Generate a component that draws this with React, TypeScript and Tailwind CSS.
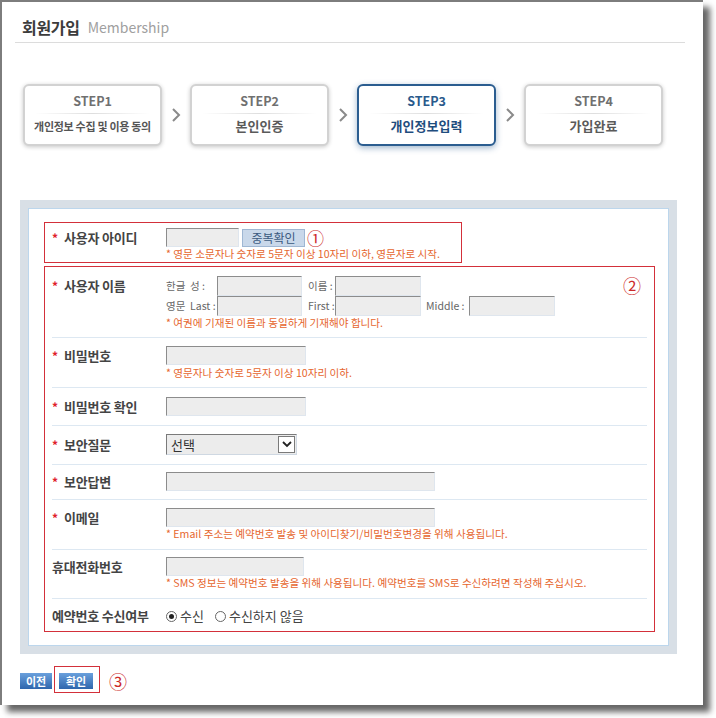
import type { ReactNode } from "react";

const FONT = "font-['Noto_Sans_CJK_KR','Noto_Sans',sans-serif]";

const steps = [
  { no: "STEP1", title: "개인정보 수집 및 이용 동의", small: true, active: false },
  { no: "STEP2", title: "본인인증", small: false, active: false },
  { no: "STEP3", title: "개인정보입력", small: false, active: true },
  { no: "STEP4", title: "가입완료", small: false, active: false },
];

function Chevron() {
  return (
    <div className="flex w-[28px] items-center justify-center">
      <svg width="10" height="16" viewBox="0 0 10 16">
        <polyline points="2,2 8,8 2,14" fill="none" stroke="#8a8a8a" strokeWidth="2" />
      </svg>
    </div>
  );
}

function StepBox({ no, title, small, active }: (typeof steps)[number]) {
  return (
    <div
      className={
        active
          ? "h-[62px] w-[139px] rounded-[6px] border-2 border-[#2b5d90] bg-white shadow-[0_2px_6px_rgba(43,93,144,0.45)]"
          : "h-[62px] w-[139px] rounded-[6px] border-2 border-[#d2d2d2] bg-white shadow-[0_1px_4px_rgba(0,0,0,0.22)]"
      }
    >
      <p
        className={`mt-[8px] text-center text-[12.5px] font-bold leading-[14px] ${
          active ? "text-[#2a5a8c]" : "text-[#707070]"
        }`}
      >
        {no}
      </p>
      <div className="mx-[10px] mt-[5px] h-px bg-gradient-to-r from-transparent via-[#dedede] to-transparent" />
      <p
        className={`mt-[4px] whitespace-nowrap text-center leading-[16px] ${
          small
            ? "text-[11px] font-bold tracking-[-0.3px] text-[#555]"
            : active
              ? "text-[13px] font-bold text-[#1f4d7e]"
              : "text-[13px] font-bold text-[#5a5a5a]"
        }`}
      >
        {title}
      </p>
    </div>
  );
}

function Input({ className }: { className: string }) {
  return (
    <div
      className={`border-b border-l border-r border-t border-b-[#dfe6ee] border-l-[#8c8c8c] border-r-[#dfe6ee] border-t-[#8c8c8c] bg-[#ededed] ${className}`}
    />
  );
}

function Note({ children }: { children: ReactNode }) {
  return <p className="text-[10.6px] leading-[12px] text-[#e6662e]">* {children}</p>;
}

type RowProps = {
  label: string;
  required?: boolean;
  className: string;
  labelH?: string;
  children: ReactNode;
};

function Row({ label, required, className, labelH = "h-[19px]", children }: RowProps) {
  return (
    <div className={`mx-[7px] flex items-start ${className}`}>
      <div className={`flex w-[114px] shrink-0 items-center ${labelH}`}>
        {required && (
          <span className="w-[12px] text-[12px] font-bold leading-none text-[#e0202a]">*</span>
        )}
        <span className="whitespace-nowrap text-[13px] font-bold tracking-[-0.2px] text-[#444]">
          {label}
        </span>
      </div>
      <div className="flex flex-col">{children}</div>
    </div>
  );
}

function Radio({ checked }: { checked?: boolean }) {
  return (
    <span className="flex h-[11px] w-[11px] items-center justify-center rounded-full border border-[#666] bg-white">
      {checked && <span className="h-[5px] w-[5px] rounded-full bg-[#222]" />}
    </span>
  );
}

export default function App() {
  return (
    <div className={`h-[718px] w-[716px] overflow-hidden bg-white ${FONT}`}>
      <div className="h-[705px] w-[703px] border-l-2 border-t-2 border-[#7d7d7d] bg-white shadow-[7px_7px_6px_rgba(0,0,0,0.6)]">
        <header className="ml-[13px] flex h-[41px] w-[670px] items-end border-b border-[#dcdcdc] pb-[5px] pl-[7px]">
          <h1 className="text-[16px] font-bold leading-[20px] tracking-[-0.3px] text-[#3c3c3c]">회원가입</h1>
          <span className="ml-[8px] text-[14px] leading-[20px] text-[#a0a0a0]">Membership</span>
        </header>

        <div className="ml-[21px] mt-[41px] flex">
          <StepBox {...steps[0]} />
          <Chevron />
          <StepBox {...steps[1]} />
          <Chevron />
          <StepBox {...steps[2]} />
          <Chevron />
          <StepBox {...steps[3]} />
        </div>

        <section className="ml-[18px] mt-[54px] w-[657px] bg-[#d8dfe6] p-[8px]">
          <div className="border border-[#bcd6ec] bg-white pb-[13px] pl-[15px] pt-[13px]">
            <div className="w-[418px] border border-[#d3303a] pb-[2px] pt-[5px]">
              <Row label="사용자 아이디" required className="">
                <div className="flex h-[19px] items-center">
                  <Input className="h-[19px] w-[73px]" />
                  <button className="ml-[3px] block h-[18px] w-[63px] border border-[#9fb7d3] bg-[#c9d8ea] text-[12px] leading-none text-[#3b5a80]">
                    중복확인
                  </button>
                  <span className="ml-[2px] text-[17px] leading-[17px] text-[#cc2a2a]">①</span>
                </div>
                <div className="mt-[1px]">
                  <Note>영문 소문자나 숫자로 5문자 이상 10자리 이하, 영문자로 시작.</Note>
                </div>
              </Row>
            </div>

            <div className="relative mt-[3px] w-[611px] border border-[#d3303a]">
              <span className="absolute right-[13px] top-[9px] text-[18px] leading-none text-[#cc2a2a]">②</span>

              <Row
                label="사용자 이름"
                required
                labelH="h-[20px]"
                className="h-[71px] border-b border-[#dde8f2] pt-[9px]"
              >
                <div className="flex items-center text-[10.5px] text-[#666]">
                  <span className="w-[51px]">한글&nbsp;&nbsp;성 :</span>
                  <Input className="h-[20px] w-[85px]" />
                  <span className="ml-[6px] w-[27px]">이름 :</span>
                  <Input className="h-[20px] w-[86px]" />
                </div>
                <div className="flex items-center text-[10.5px] text-[#666]">
                  <span className="w-[51px]">영문&nbsp;&nbsp;Last :</span>
                  <Input className="h-[20px] w-[85px]" />
                  <span className="ml-[6px] w-[27px]">First :</span>
                  <Input className="h-[20px] w-[86px]" />
                  <span className="ml-[5px] w-[43px]">Middle :</span>
                  <Input className="h-[20px] w-[86px]" />
                </div>
                <div className="mt-[1px]">
                  <Note>여권에 기재된 이름과 동일하게 기재해야 합니다.</Note>
                </div>
              </Row>

              <Row label="비밀번호" required className="h-[50px] border-b border-[#dde8f2] pt-[8px]">
                <Input className="h-[19px] w-[140px]" />
                <div className="mt-[2px]">
                  <Note>영문자나 숫자로 5문자 이상 10자리 이하.</Note>
                </div>
              </Row>

              <Row label="비밀번호 확인" required className="h-[38px] border-b border-[#dde8f2] pt-[9px]">
                <Input className="h-[19px] w-[140px]" />
              </Row>

              <Row
                label="보안질문"
                required
                labelH="h-[21px]"
                className="h-[39px] border-b border-[#dde8f2] pt-[8px]"
              >
                <div className="flex h-[21px] w-[131px] items-center border border-b-[#cfd8e2] border-l-[#7a7a7a] border-r-[#cfd8e2] border-t-[#7a7a7a] bg-[#ececec] pl-[4px]">
                  <span className="flex-1 text-[13px] leading-none text-[#333]">선택</span>
                  <span className="mr-[1px] flex h-[17px] w-[17px] items-center justify-center border border-[#7a7a7a] bg-white">
                    <svg width="10" height="7" viewBox="0 0 10 7">
                      <polyline points="1,1 5,5 9,1" fill="none" stroke="#222" strokeWidth="1.8" />
                    </svg>
                  </span>
                </div>
              </Row>

              <Row label="보안답변" required className="h-[35px] border-b border-[#dde8f2] pt-[7px]">
                <Input className="h-[19px] w-[269px]" />
              </Row>

              <Row label="이메일" required className="h-[50px] border-b border-[#dde8f2] pt-[8px]">
                <Input className="h-[19px] w-[269px]" />
                <div className="mt-[1px]">
                  <Note>Email 주소는 예약번호 발송 및 아이디찾기/비밀번호변경을 위해 사용됩니다.</Note>
                </div>
              </Row>

              <Row label="휴대전화번호" className="h-[49px] border-b border-[#dde8f2] pt-[7px]">
                <Input className="h-[19px] w-[138px]" />
                <div className="mt-[1px]">
                  <Note>SMS 정보는 예약번호 발송을 위해 사용됩니다. 예약번호를 SMS로 수신하려면 작성해 주십시오.</Note>
                </div>
              </Row>

              <Row label="예약번호 수신여부" labelH="h-[20px]" className="h-[32px] pt-[7px]">
                <div className="flex h-[20px] items-center text-[13px] text-[#444]">
                  <Radio checked />
                  <span className="ml-[3px]">수신</span>
                  <span className="ml-[11px]">
                    <Radio />
                  </span>
                  <span className="ml-[3px]">수신하지 않음</span>
                </div>
              </Row>
            </div>
          </div>
        </section>

        <div className="ml-[18px] mt-[12px] flex items-start">
          <button className="mt-[7px] block h-[16px] w-[32px] bg-gradient-to-b from-[#6aa0dc] to-[#2e66ad] text-[11px] font-bold leading-none text-white">
            이전
          </button>
          <div className="ml-[2px] border border-[#d3303a] pb-[3px] pl-[4px] pr-[6px] pt-[6px]">
            <button className="block h-[16px] w-[34px] bg-gradient-to-b from-[#6aa0dc] to-[#2e66ad] text-[11px] font-bold leading-none text-white">
              확인
            </button>
          </div>
          <span className="ml-[9px] mt-[6px] text-[18px] leading-none text-[#cc2a2a]">③</span>
        </div>
      </div>
    </div>
  );
}
